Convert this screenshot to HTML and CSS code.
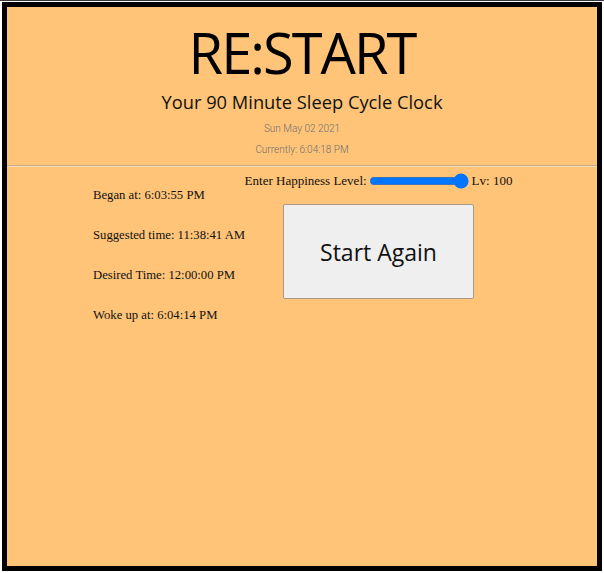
FILE: index.html
```html
<!DOCTYPE html>
<html lang="en">
<head>
<meta charset="utf-8">
<title>RE:START</title>
<link rel="stylesheet" href="styles.css">
</head>
<body>
<div class="topline"></div>
<main class="frame">
  <header class="head">
    <h1 class="title">RE:START</h1>
    <h2 class="subtitle">Your 90 Minute Sleep Cycle Clock</h2>
    <p class="date">Sun May 02 2021</p>
    <p class="date now">Currently: 6:04:18 PM</p>
  </header>
  <hr class="rule">
  <section class="content">
    <div class="times">
      <p class="time first">Began at: 6:03:55 PM</p>
      <p class="time">Suggested time: 11:38:41 AM</p>
      <p class="time">Desired Time: 12:00:00 PM</p>
      <p class="time">Woke up at: 6:04:14 PM</p>
    </div>
    <div class="controls">
      <label class="level">Enter Happiness Level:<input class="slider" type="range" min="0" max="100" value="100">Lv: 100</label>
      <button class="again" type="button">Start Again</button>
    </div>
  </section>
</main>
</body>
</html>
```
FILE: styles.css
```css
html, body {
  margin: 0;
  padding: 0;
  background: #ffffff;
}
body {
  width: 604px;
  height: 573px;
  overflow: hidden;
}
.topline {
  height: 1px;
  background: #3a3a3a;
  margin-bottom: 1px;
}
.frame {
  box-sizing: border-box;
  width: 600px;
  height: 569px;
  margin-left: 2px;
  border: 5px solid #000;
  background: #ffc478;
}
.head {
  text-align: center;
  padding-top: 9px;
}
.title {
  margin: 0;
  font-family: "Open Sans", sans-serif;
  font-weight: 400;
  font-size: 56px;
  line-height: 72px;
  letter-spacing: -2px;
  color: #000;
}
.subtitle {
  margin: 1px 0 0;
  font-family: "Open Sans", sans-serif;
  font-weight: 400;
  font-size: 18.3px;
  line-height: 26px;
  color: #111;
}
.date {
  margin: 7px 0 0;
  font-family: Roboto, sans-serif;
  font-weight: 300;
  font-size: 10px;
  line-height: 14px;
  color: #707070;
}
.date.now {
  margin-top: 7px;
}
.rule {
  margin: 8px 0 0;
  border: 0;
  border-top: 1px solid #d0ad82;
  border-bottom: 1px solid #f3dcc0;
  height: 0;
}
.content {
  display: flex;
  padding-left: 86px;
}
.times {
  width: 153px;
  padding-top: 20px;
  white-space: nowrap;
}
.time {
  margin: 0 0 24px;
  font-family: "Liberation Serif", serif;
  font-size: 12.7px;
  line-height: 16px;
  color: #111;
}
.controls {
  width: 265px;
  display: flex;
  flex-direction: column;
  align-items: center;
  padding-top: 6px;
}
.level {
  display: flex;
  align-items: center;
  font-family: "Liberation Serif", serif;
  font-size: 13px;
  line-height: 16px;
  color: #111;
  white-space: nowrap;
}
.slider {
  width: 100px;
  margin: 0 3px 0 2px;
  accent-color: #0075ff;
}
.again {
  margin-top: 15px;
  width: 191px;
  height: 95px;
  background: #efefef;
  border: 1px solid #a89a88;
  border-radius: 2px;
  font-family: "Open Sans", sans-serif;
  font-size: 23px;
  color: #111;
}
```
